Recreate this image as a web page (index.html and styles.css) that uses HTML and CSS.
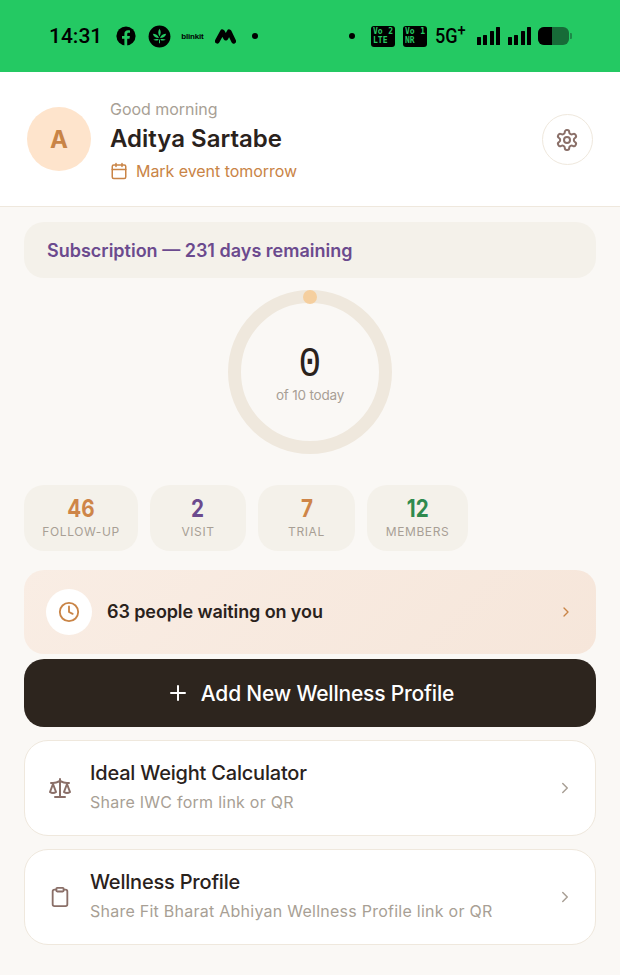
FILE: index.html
```html
<!DOCTYPE html>
<html lang="en">
<head>
<meta charset="utf-8">
<title>Wellness Home</title>
<link rel="stylesheet" href="styles.css">
</head>
<body>
<div class="status">
  <div class="status-side">
    <span class="time">14:31</span>
    <svg class="ic-fb" viewBox="0 0 20 20"><circle cx="10" cy="10" r="9.6" fill="#000"/><path d="M8.4 20V12.8H6V10h2.4V7.9c0-2.4 1.4-3.7 3.6-3.7.9 0 1.7.1 2 .2v2.4h-1.3c-1.2 0-1.5.6-1.5 1.4V10h2.7l-.4 2.8h-2.3V20z" fill="#24C963"/></svg>
    <svg class="ic-leaf" viewBox="0 0 24 24"><circle cx="12" cy="12" r="11.4" fill="#000"/><path d="M12 4c1.6 2.4 1.8 5 0 8-1.800-3-1.600-5.600 0-8zM5 9c3 0 5.300 1.300 6.500 4.500C8 13.500 6 12 5 9zM19 9c-3 0-5.300 1.300-6.500 4.500C16 13.500 18 12 19 9zM5.500 15.500c2-1 4-1 5.800-.5-1.300 1.500-3.800 1.700-5.800.5zM18.500 15.500c-2-1-4-1-5.800-.5 1.300 1.500 3.800 1.700 5.800.5zM11.500 15h1v4h-1z" fill="#24C963"/></svg>
    <span class="blinkit">blinkit</span>
    <svg class="ic-m" viewBox="0 0 20 14"><path d="M2.200 11.500 7 2.500l3.300 6 3.200-6 4.300 9" fill="none" stroke="#000" stroke-width="4.600" stroke-linejoin="round" stroke-linecap="round"/></svg>
    <span class="dot"></span>
  </div>
  <div class="status-side">
    <span class="dot"></span>
    <span class="volte"><span class="vo-row"><span>Vo</span><span>2</span></span><span class="vo-row"><span>LTE</span></span></span>
    <span class="volte"><span class="vo-row"><span>Vo</span><span>1</span></span><span class="vo-row"><span>NR</span></span></span>
    <span class="net">5G<sup class="plus">+</sup></span>
    <span class="bars"><i class="b1"></i><i class="b2"></i><i class="b3"></i><i class="b4"></i></span>
    <span class="bars"><i class="b1"></i><i class="b2"></i><i class="b3"></i><i class="b4"></i></span>
    <span class="battery-wrap"><span class="battery"><span class="battery-fill"></span></span><span class="battery-nub"></span></span>
  </div>
</div>

<header class="head">
  <div class="avatar">A</div>
  <div class="head-text">
    <div class="greet">Good morning</div>
    <div class="name">Aditya Sartabe</div>
    <div class="event">
      <svg class="ic-cal" viewBox="0 0 24 24" fill="none" stroke="currentColor" stroke-width="2" stroke-linecap="round" stroke-linejoin="round"><rect x="3" y="4" width="18" height="18" rx="2"/><path d="M16 2v4M8 2v4M3 10h18"/></svg>
      <span>Mark event tomorrow</span>
    </div>
  </div>
  <div class="settings">
    <svg viewBox="0 0 24 24" fill="none" stroke="#8A6F68" stroke-width="2" stroke-linecap="round" stroke-linejoin="round"><path d="M12.220 2h-.44a2 2 0 0 0-2 2v.18a2 2 0 0 1-1 1.730l-.43.250a2 2 0 0 1-2 0l-.15-.080a2 2 0 0 0-2.730.730l-.22.380a2 2 0 0 0 .730 2.730l.15.100a2 2 0 0 1 1 1.720v.510a2 2 0 0 1-1 1.740l-.15.090a2 2 0 0 0-.730 2.730l.22.380a2 2 0 0 0 2.730.730l.15-.080a2 2 0 0 1 2 0l.43.250a2 2 0 0 1 1 1.730V20a2 2 0 0 0 2 2h.44a2 2 0 0 0 2-2v-.18a2 2 0 0 1 1-1.730l.43-.250a2 2 0 0 1 2 0l.15.080a2 2 0 0 0 2.730-.730l.22-.390a2 2 0 0 0-.730-2.730l-.15-.080a2 2 0 0 1-1-1.740v-.5a2 2 0 0 1 1-1.740l.15-.090a2 2 0 0 0 .730-2.730l-.22-.380a2 2 0 0 0-2.730-.730l-.15.080a2 2 0 0 1-2 0l-.43-.250a2 2 0 0 1-1-1.730V4a2 2 0 0 0-2-2z"/><circle cx="12" cy="12" r="3"/></svg>
  </div>
</header>

<main class="main">
  <div class="sub-pill">Subscription — 231 days remaining</div>

  <div class="ring">
    <svg class="ring-svg" viewBox="0 0 164 164"><circle cx="82" cy="82" r="75.500" fill="none" stroke="#EFE8DD" stroke-width="13"/><circle cx="82" cy="7" r="7" fill="#F5CF9F"/></svg>
    <div class="ring-text">
      <div class="ring-num">0</div>
      <div class="ring-label">of 10 today</div>
    </div>
  </div>

  <div class="stats">
    <div class="stat stat-a"><div class="stat-num orange">46</div><div class="stat-label">FOLLOW-UP</div></div>
    <div class="stat stat-b"><div class="stat-num purple">2</div><div class="stat-label">VISIT</div></div>
    <div class="stat stat-c"><div class="stat-num orange">7</div><div class="stat-label">TRIAL</div></div>
    <div class="stat stat-d"><div class="stat-num green">12</div><div class="stat-label">MEMBERS</div></div>
  </div>

  <div class="banner">
    <div class="banner-icon">
      <svg viewBox="0 0 24 24" fill="none" stroke="#C98446" stroke-width="2" stroke-linecap="round" stroke-linejoin="round"><circle cx="12" cy="12" r="10"/><path d="M12 6v6l4 2"/></svg>
    </div>
    <div class="banner-text">63 people waiting on you</div>
    <svg class="banner-chev" viewBox="0 0 24 24" fill="none" stroke="#C98446" stroke-width="2" stroke-linecap="round" stroke-linejoin="round"><path d="m9 18 6-6-6-6"/></svg>
  </div>

  <button class="add-btn">
    <svg viewBox="0 0 24 24" fill="none" stroke="#fff" stroke-width="2" stroke-linecap="round"><path d="M5 12h14M12 5v14"/></svg>
    <span>Add New Wellness Profile</span>
  </button>

  <div class="card card-first">
    <svg class="card-icon" viewBox="0 0 24 24" fill="none" stroke="#8A6F68" stroke-width="2" stroke-linecap="round" stroke-linejoin="round"><path d="m16 16 3-8 3 8c-.87.650-1.920 1-3 1s-2.130-.350-3-1Z"/><path d="m2 16 3-8 3 8c-.87.650-1.920 1-3 1s-2.130-.350-3-1Z"/><path d="M7 21h10"/><path d="M12 3v18"/><path d="M3 7h2c2 0 5-1 7-2 2 1 5 2 7 2h2"/></svg>
    <div class="card-text">
      <div class="card-title">Ideal Weight Calculator</div>
      <div class="card-sub">Share IWC form link or QR</div>
    </div>
    <svg class="card-chev" viewBox="0 0 24 24" fill="none" stroke="#A89F95" stroke-width="2" stroke-linecap="round" stroke-linejoin="round"><path d="m9 18 6-6-6-6"/></svg>
  </div>

  <div class="card">
    <svg class="card-icon card-icon-sm" viewBox="0 0 24 24" fill="none" stroke="#8A6F68" stroke-width="2" stroke-linecap="round" stroke-linejoin="round"><rect x="8" y="2" width="8" height="4" rx="1"/><path d="M16 4h2a2 2 0 0 1 2 2v14a2 2 0 0 1-2 2H6a2 2 0 0 1-2-2V6a2 2 0 0 1 2-2h2"/></svg>
    <div class="card-text">
      <div class="card-title">Wellness Profile</div>
      <div class="card-sub">Share Fit Bharat Abhiyan Wellness Profile link or QR</div>
    </div>
    <svg class="card-chev" viewBox="0 0 24 24" fill="none" stroke="#A89F95" stroke-width="2" stroke-linecap="round" stroke-linejoin="round"><path d="m9 18 6-6-6-6"/></svg>
  </div>
</main>
</body>
</html>
```
FILE: styles.css
```css
* { box-sizing: border-box; }
html, body { margin: 0; padding: 0; }
body {
  width: 620px;
  height: 975px;
  overflow: hidden;
  background: #FAF8F5;
  font-family: "Inter", "Liberation Sans", sans-serif;
  color: #2A221C;
}

/* status bar */
.status {
  height: 72px;
  background: #24C963;
  display: flex;
  justify-content: space-between;
  align-items: center;
  padding: 0 48px 0 49px;
  color: #000;
}
.status-side { display: flex; align-items: center; }
.time { font-family: "Roboto", sans-serif; font-size: 21px; font-weight: 500; }
.ic-fb { width: 20px; height: 20px; margin-left: 14px; }
.ic-leaf { width: 23px; height: 23px; margin-left: 12px; }
.blinkit { font-family: "Liberation Sans", sans-serif; font-size: 8px; font-weight: 700; margin-left: 10px; letter-spacing: -.2px; }
.ic-m { width: 21px; height: 15px; margin-left: 12px; }
.dot { width: 6px; height: 6px; border-radius: 50%; background: #000; }
.ic-m + .dot { margin-left: 16px; }
.volte {
  width: 24px; height: 21px; background: #000; border-radius: 3px;
  color: #24C963; font-family: "DejaVu Sans Mono", monospace; font-size: 8px; font-weight: 700; line-height: 9.500px;
  display: flex; flex-direction: column; justify-content: center; padding: 0 2px;
  margin-left: 8px;
}
.dot + .volte { margin-left: 16px; }
.vo-row { display: flex; justify-content: space-between; transform: scaleY(1.15); }
.net { font-family: "Roboto", sans-serif; font-size: 21px; font-weight: 500; margin-left: 8px; display: flex; transform: scaleX(.86); transform-origin: left; width: 33px; white-space: nowrap; }
.plus { font-size: 17px; line-height: 15px; margin-top: -1px; }
.bars { display: flex; align-items: flex-end; justify-content: space-between; width: 23px; height: 18px; margin-left: 8px; }
.net + .bars { margin-left: 9px; }
.bars i { display: block; width: 4px; background: #000; border-radius: .5px; }
.b1 { height: 8px; } .b2 { height: 10px; } .b3 { height: 14px; } .b4 { height: 18px; }
.battery-wrap { display: flex; align-items: center; gap: 1px; margin-left: 7px; }
.battery { width: 31px; height: 18px; border-radius: 6px; background: #176B38; overflow: hidden; display: block; }
.battery-fill { display: block; width: 14px; height: 100%; background: #000; }
.battery-nub { display: block; width: 2px; height: 6px; border-radius: 0 1px 1px 0; background: #1C8A48; }

/* header */
.head {
  height: 135px;
  background: #fff;
  border-bottom: 1px solid #EFE8DD;
  display: flex;
  align-items: flex-start;
  padding: 26px 27px 0;
}
.avatar {
  width: 64px; height: 64px; margin-top: 9px; border-radius: 50%;
  background: #FEE4CC; color: #C98446;
  display: flex; align-items: center; justify-content: center;
  font-size: 24px; font-weight: 700;
}
.head-text { margin-left: 19px; flex: 1; }
.greet { font-size: 16px; line-height: 22px; color: #A89F95; letter-spacing: -.03px; }
.name { font-size: 24px; line-height: 32px; font-weight: 600; margin-top: 3px; }
.event { display: flex; align-items: center; gap: 8px; margin-top: 5px; color: #C98446; font-size: 16px; line-height: 22px; letter-spacing: -.05px; }
.ic-cal { width: 18px; height: 18px; margin-left: 0; }
.settings {
  width: 51px; height: 51px; margin-top: 16px; border-radius: 50%;
  border: 1px solid #EFE8DD; display: flex; align-items: center; justify-content: center;
}
.settings svg { width: 24px; height: 24px; margin-right: 1px; }

/* main */
.main { padding: 15px 24px 0; }
.sub-pill {
  height: 56px; border-radius: 20px; background: #F4F1EA;
  display: flex; align-items: center; padding-left: 23px;
  color: #6B4A8E; font-size: 18px; font-weight: 600;
}
.ring { position: relative; width: 164px; height: 164px; margin: 12px auto 0; }
.ring-svg { display: block; width: 164px; height: 164px; }
.ring-text {
  position: absolute; inset: 0; display: flex; flex-direction: column;
  align-items: center; justify-content: center;
}
.ring-num { font-family: "Liberation Mono", monospace; font-size: 43px; line-height: 44px; margin-top: 3px; transform: scaleX(.88); }
.ring-label { font-size: 13.500px; line-height: 20px; margin-top: -2px; color: #A89F95; letter-spacing: -.2px; }

.stats { display: flex; gap: 12px; margin-top: 31px; }
.stat {
  height: 66px; border-radius: 20px; background: #F4F1EA;
  display: flex; flex-direction: column; align-items: center; padding-top: 9px;
}
.stat-a { width: 114px; } .stat-b { width: 96px; } .stat-c { width: 97px; } .stat-d { width: 101px; }
.stat-num { font-size: 24px; line-height: 29px; font-weight: 700; transform: scaleX(.86); }
.orange { color: #CE8548; } .purple { color: #6B4A8E; } .green { color: #2F8A4E; }
.stat-label { font-size: 12px; line-height: 16px; color: #A89F95; letter-spacing: .6px; margin-top: 1px; }

.banner {
  height: 84px; margin-top: 19px; border-radius: 20px;
  background: linear-gradient(135deg, #F9EDE4, #F6E6DA);
  display: flex; align-items: center; padding: 0 22px;
}
.banner-icon {
  width: 46px; height: 46px; border-radius: 50%; background: #fff;
  display: flex; align-items: center; justify-content: center;
}
.banner-icon svg { width: 22px; height: 22px; }
.banner-text { flex: 1; margin-left: 15px; padding-bottom: 2px; font-size: 18px; font-weight: 600; letter-spacing: -.1px; }
.banner-chev { width: 16px; height: 16px; }

.add-btn {
  width: 100%; height: 68px; margin-top: 5px; border: 0; border-radius: 20px;
  background: #2D251E; color: #fff;
  font-family: inherit; font-size: 21px; font-weight: 500; letter-spacing: -.2px;
  display: flex; align-items: center; justify-content: center; gap: 11px;
}
.add-btn svg { width: 24px; height: 24px; }

.card {
  height: 96px; margin-top: 13px; border-radius: 24px;
  background: #fff; border: 1px solid #EFE8DD;
  display: flex; align-items: center; padding: 0 21px 0 23px;
}
.card-icon { width: 24px; height: 24px; flex: none; }
.card-icon-sm { width: 22px; height: 22px; margin: 0 1px; }
.card-text { flex: 1; margin-left: 18px; padding-bottom: 4px; }
.card-title { font-size: 20px; line-height: 28px; font-weight: 500; letter-spacing: -.2px; }
.card-sub { font-size: 16px; line-height: 22px; margin-top: 4px; color: #A89F95; letter-spacing: .25px; }
.card-chev { width: 18px; height: 18px; flex: none; }
```
